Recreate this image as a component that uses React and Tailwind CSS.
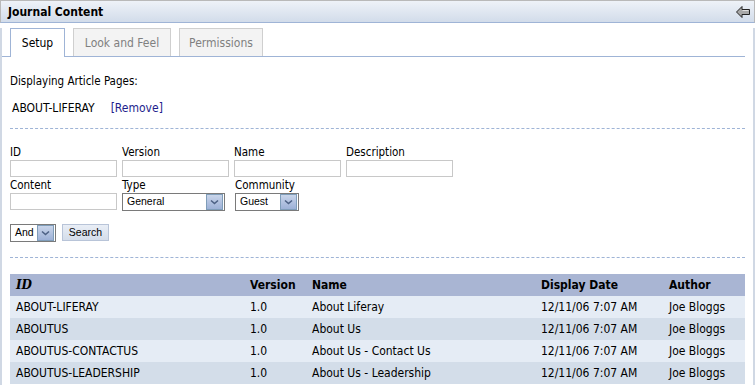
import React from "react";

const rows = [
  ["ABOUT-LIFERAY", "1.0", "About Liferay"],
  ["ABOUTUS", "1.0", "About Us"],
  ["ABOUTUS-CONTACTUS", "1.0", "About Us - Contact Us"],
  ["ABOUTUS-LEADERSHIP", "1.0", "About Us - Leadership"],
];

function Field({ label, w = "w-[107px]" }) {
  return (
    <div className="flex flex-col">
      <span className="h-[15px] leading-[15px]">{label}</span>
      <div className={`${w} h-[17px] border border-[#c8c8c8] bg-white`} />
    </div>
  );
}

function Arrow() {
  return (
    <div className="w-[17px] h-[16px] bg-[linear-gradient(#c9d5ea,#9db1d7)] border border-[#7f9db9] flex items-center justify-center ml-auto">
      <svg width="9" height="6" viewBox="0 0 9 6">
        <path d="M1 1.5 L4.5 4.5 L8 1.5" fill="none" stroke="#4d6185" strokeWidth="1.6" />
      </svg>
    </div>
  );
}

function Select({ label, w }) {
  return (
    <div className={`${w} h-[18px] border border-[#7a7a7a] bg-white flex items-center pl-[4px] pr-[1px] font-['Liberation_Sans',sans-serif] text-[10.5px] text-black`}>
      <span>{label}</span>
      <Arrow />
    </div>
  );
}

export default function App() {
  return (
    <div className="w-[755px] h-[385px] overflow-hidden bg-white text-[11.5px] text-black font-['DejaVu_Sans_Condensed','DejaVu_Sans',sans-serif]">
      <div className="h-[23px] border-t border-l border-r border-[#b9b9b9] border-b border-b-[#9fb4d6] bg-[linear-gradient(#eef2f8,#d2dcea)] flex items-center pl-[7px] pr-[4px]">
        <span className="font-bold text-[12px] text-black">Journal Content</span>
        <svg className="ml-auto" width="14" height="12" viewBox="0 0 14 12">
          <path d="M0.5 6 L6 0.5 L6 3.5 L13.5 3.5 L13.5 8.5 L6 8.5 L6 11.5 Z" fill="#a8a8a8" stroke="#222" strokeWidth="1" />
          <path d="M6.5 4.5 L12.5 4.5" stroke="#e0e0e0" strokeWidth="1" />
        </svg>
      </div>
      <div className="h-[362px] border-l-2 border-r-2 border-[#d0d8e4] pr-[8px]">
        <div className="mt-[5px] h-[29px] border-b border-[#9fb4d6] flex items-end gap-[8px] pl-[8px]">
          <div className="h-[29px] -mb-px w-[55px] border border-b-0 border-[#9fb4d6] bg-white flex items-center justify-center text-[12px]">Setup</div>
          <div className="h-[28px] w-[98px] border border-b-0 border-[#cfcfcf] bg-[#f3f3f3] flex items-center justify-center text-[12px] text-[#808080]">Look and Feel</div>
          <div className="h-[28px] w-[84px] border border-b-0 border-[#cfcfcf] bg-[#f3f3f3] flex items-center justify-center text-[12px] text-[#808080]">Permissions</div>
        </div>
        <div className="pl-[8px]">
          <div className="mt-[17px] leading-[14px]">Displaying Article Pages:</div>
          <div className="mt-[13px] leading-[14px] flex gap-[16px] pl-[2px] text-[12px]">
            <span>ABOUT-LIFERAY</span>
            <span className="text-[#1e1e8c]">[Remove]</span>
          </div>
          <div className="mt-[13px] border-t border-dashed border-[#9fb4d6]" />
          <div className="mt-[16px] flex gap-[5px]">
            <Field label="ID" />
            <Field label="Version" />
            <Field label="Name" />
            <Field label="Description" />
          </div>
          <div className="mt-[1px] flex gap-[5px]">
            <Field label="Content" />
            <div className="flex flex-col">
              <span className="h-[15px] leading-[15px]">Type</span>
              <Select label="General" w="w-[103px]" />
            </div>
            <div className="flex flex-col ml-[5px]">
              <span className="h-[15px] leading-[15px]">Community</span>
              <Select label="Guest" w="w-[64px]" />
            </div>
          </div>
          <div className="mt-[13px] flex gap-[6px] items-start">
            <Select label="And" w="w-[46px]" />
            <div className="h-[17px] w-[47px] border border-[#b8c4d8] bg-[linear-gradient(#e9eef6,#d4ddea)] flex items-center justify-center font-['Liberation_Sans',sans-serif] text-[10.5px]">Search</div>
          </div>
          <div className="mt-[15px] border-t border-dashed border-[#9fb4d6]" />
          <table className="mt-[16px] w-full border-collapse text-[12px]">
            <thead>
              <tr className="h-[22px] bg-[#a9b5d3]">
                <th className="text-left font-bold italic pl-[6px] font-['DejaVu_Serif',serif]">ID</th>
                <th className="text-left font-bold w-[62px]">Version</th>
                <th className="text-left font-bold w-[229px]">Name</th>
                <th className="text-left font-bold w-[128px]">Display Date</th>
                <th className="text-left font-bold w-[76px]">Author</th>
              </tr>
            </thead>
            <tbody>
              {rows.map((r, i) => (
                <tr key={r[0]} className={`h-[22px] ${i % 2 === 0 ? "bg-[#e5ecf5]" : "bg-[#d3dde9]"}`}>
                  <td className="pl-[6px]">{r[0]}</td>
                  <td>{r[1]}</td>
                  <td>{r[2]}</td>
                  <td>12/11/06 7:07 AM</td>
                  <td>Joe Bloggs</td>
                </tr>
              ))}
            </tbody>
          </table>
        </div>
      </div>
    </div>
  );
}
